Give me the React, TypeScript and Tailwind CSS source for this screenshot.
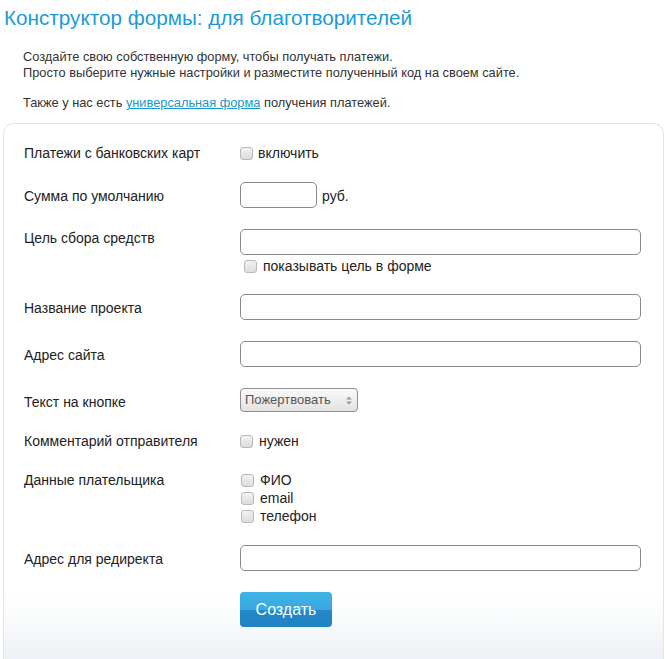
import React from 'react';

const Box = ({ className = '' }: { className?: string }) => (
  <input
    type="checkbox"
    className={`appearance-none w-[13px] h-[13px] shrink-0 rounded-[3px] border border-[#b9b9b9] bg-[linear-gradient(to_bottom,#f2f2f2,#dcdcdc)] ${className}`}
  />
);

const Field = ({ className = '' }: { className?: string }) => (
  <input
    type="text"
    className={`h-[26px] rounded-[5px] border border-[#8a8a8a] bg-white px-2 text-sm outline-none ${className}`}
  />
);

const Label = ({ children, className = '' }: { children: React.ReactNode; className?: string }) => (
  <div className={`w-[216px] shrink-0 text-[14px] leading-[18px] text-[#222] ${className}`}>{children}</div>
);

export default function App() {
  return (
    <div className="min-h-[659px] bg-white font-['Liberation_Sans',Arial,sans-serif]">
      <h1 className="pl-[4px] pt-[5px] text-[20.7px] leading-[26px] text-[#1b9bd7]">
        Конструктор формы: для благотворителей
      </h1>

      <div className="mt-[18px] pl-[23px] font-['Liberation_Sans_Narrow','Arial_Narrow','Liberation_Sans',sans-serif] text-[12.8px] leading-[16px] text-[#333]">
        <p>Создайте свою собственную форму, чтобы получать платежи.</p>
        <p>Просто выберите нужные настройки и разместите полученный код на своем сайте.</p>
        <p className="mt-[14px]">
          Также у нас есть{' '}
          <a href="#" className="text-[#1a98c9] underline">
            универсальная форма
          </a>{' '}
          получения платежей.
        </p>
      </div>

      <div className="ml-[3px] mt-[12px] w-[661px] h-[536px] rounded-t-[10px] border border-b-0 border-[#e4e4e4] bg-[linear-gradient(to_bottom,#ffffff_88%,#eef1f5_100%)] pl-[20px] pr-[22px] pt-[20px]">
        {/* карты */}
        <div className="flex items-center h-[18px]">
          <Label>Платежи с банковских карт</Label>
          <label className="flex items-center gap-[5px] text-[14px] leading-[18px] text-[#222]">
            <Box />
            включить
          </label>
        </div>

        {/* сумма */}
        <div className="mt-[20px] flex items-start">
          <Label className="pt-[5px]">Сумма по умолчанию</Label>
          <Field className="w-[77px]" />
          <span className="ml-[5px] pt-[5px] text-[14px] leading-[18px] text-[#222]">руб.</span>
        </div>

        {/* цель */}
        <div className="mt-[21px] flex items-start">
          <Label>Цель сбора средств</Label>
          <div className="flex-1">
            <Field className="w-full" />
            <label className="mt-[2px] ml-[4px] flex items-center gap-[6px] text-[14px] leading-[18px] text-[#222]">
              <Box />
              показывать цель в форме
            </label>
          </div>
        </div>

        {/* название */}
        <div className="mt-[19px] flex items-start">
          <Label className="pt-[5px]">Название проекта</Label>
          <Field className="flex-1" />
        </div>

        {/* адрес */}
        <div className="mt-[21px] flex items-start">
          <Label className="pt-[5px]">Адрес сайта</Label>
          <Field className="flex-1" />
        </div>

        {/* кнопка */}
        <div className="mt-[21px] flex items-start">
          <Label className="pt-[5px]">Текст на кнопке</Label>
          <div className="relative flex h-[24px] w-[118px] items-center rounded-[4px] border border-[#8e8e8e] bg-[linear-gradient(to_bottom,#fafafa,#e2e2e2)] pl-[4px] text-[13px] text-[#555]">
            Пожертвовать
            <svg className="absolute right-[5px] top-[7px]" width="6" height="9" viewBox="0 0 6 9">
              <path d="M0 3.5 L3 0.5 L6 3.5 Z M0 5.5 L3 8.5 L6 5.5 Z" fill="#999" />
            </svg>
          </div>
        </div>

        {/* комментарий */}
        <div className="mt-[20px] flex items-center h-[18px]">
          <Label>Комментарий отправителя</Label>
          <label className="flex items-center gap-[6px] text-[14px] leading-[18px] text-[#222]">
            <Box />
            нужен
          </label>
        </div>

        {/* данные */}
        <div className="mt-[21px] flex items-start">
          <Label>Данные плательщика</Label>
          <div className="ml-[1px] flex flex-col">
            {['ФИО', 'email', 'телефон'].map((t) => (
              <label key={t} className="flex items-center gap-[6px] text-[14px] leading-[18px] text-[#222]">
                <Box />
                {t}
              </label>
            ))}
          </div>
        </div>

        {/* редирект */}
        <div className="mt-[20px] flex items-start">
          <Label className="pt-[5px]">Адрес для редиректа</Label>
          <Field className="flex-1" />
        </div>

        <div className="mt-[21px] pl-[216px]">
          <button className="h-[35px] w-[92px] rounded-[4px] bg-[linear-gradient(to_bottom,#3fb3e6_0%,#39a9df_50%,#2489c9_50%,#1f82c2_100%)] text-[16px] text-white">
            Создать
          </button>
        </div>
      </div>
    </div>
  );
}
